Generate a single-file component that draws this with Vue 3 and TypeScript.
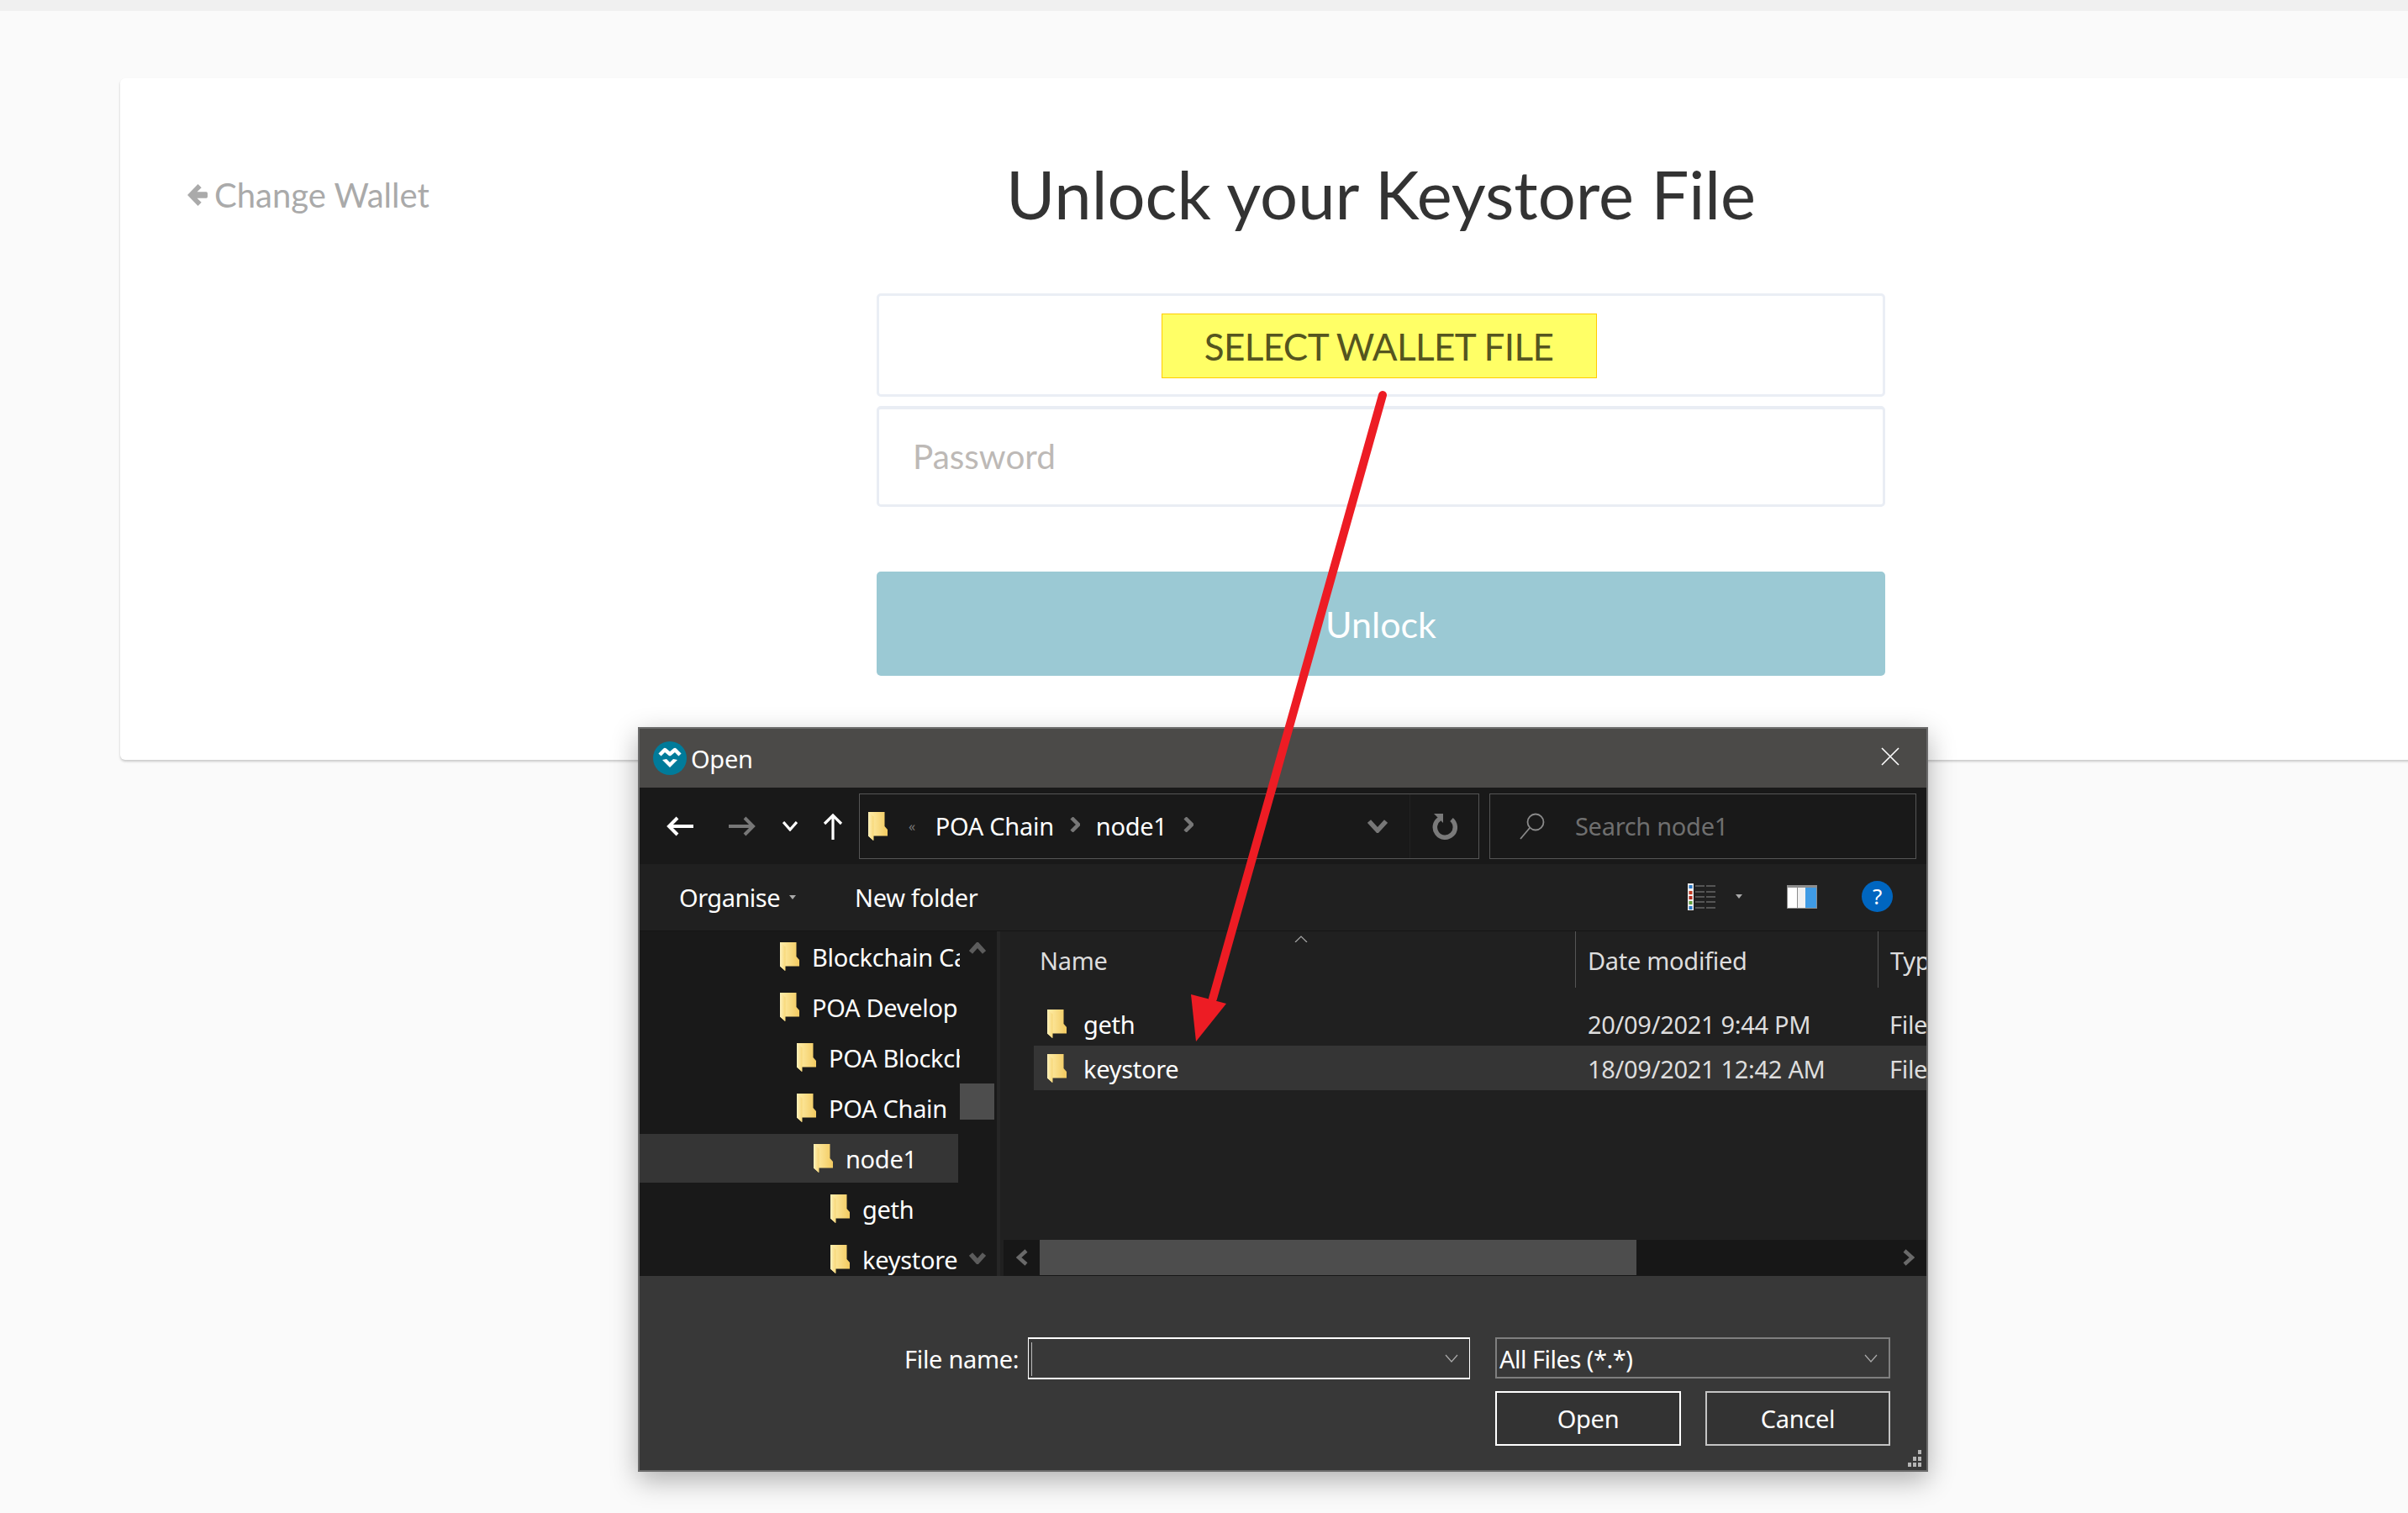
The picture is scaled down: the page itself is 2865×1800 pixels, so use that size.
<template>
  <div class="page">
    <svg class="defs" width="0" height="0">
      <defs>
        <linearGradient id="folderBody" x1="0" y1="0" x2="1" y2="0">
          <stop offset="0" stop-color="#ffeeaa" />
          <stop offset="1" stop-color="#f2ca60" />
        </linearGradient>
        <linearGradient id="folderFlap" x1="0" y1="0" x2="1" y2="0">
          <stop offset="0" stop-color="#fef2bd" />
          <stop offset="1" stop-color="#f7d777" />
        </linearGradient>
        <symbol id="folder" viewBox="0 0 23 34">
          <path d="M1 0H19.500V17L23 21V28.500H6V34L0 28.500V0Z" fill="url(#folderBody)" />
          <path d="M0 0L6.500 5.500V34L0 28.500Z" fill="url(#folderFlap)" />
        </symbol>
      </defs>
    </svg>

    <div class="topbar"></div>

    <section class="card">
      <a class="back">
        <svg class="back-icon" viewBox="0 0 23 25">
          <path d="M12 0L0 12.500L12 25L16 21L11 16H21.500Q23 16 23 14.500V10.500Q23 9 21.500 9H11L16 4Z" />
        </svg>
        <span>Change Wallet</span>
      </a>
      <div class="form">
        <h1>Unlock your Keystore File</h1>
        <div class="file-box">
          <button class="select-file">SELECT WALLET FILE</button>
        </div>
        <div class="password">Password</div>
        <button class="unlock">Unlock</button>
      </div>
    </section>

    <div class="dialog">
      <header class="titlebar">
        <svg class="logo" viewBox="0 0 40 40">
          <ellipse cx="20" cy="20" rx="20" ry="20" fill="#007b9a" />
          <path d="M8 16L14 10L20 15L26 10L32 16" fill="none" stroke="#fff" stroke-width="4.500" stroke-linejoin="round" />
          <path d="M11 22L20 31L29 22L24 21L20 25L16 21Z" fill="#fff" />
        </svg>
        <span class="title-text">Open</span>
        <svg class="close" viewBox="0 0 22 22">
          <path d="M1 1L21 21M21 1L1 21" stroke="#fff" stroke-width="1.600" />
        </svg>
      </header>

      <div class="toolbar">
        <svg class="nav-icon back-nav" viewBox="0 0 32 24">
          <path d="M32 12H3M13 2L3 12L13 22" fill="none" stroke="#fff" stroke-width="4" />
        </svg>
        <svg class="nav-icon forward-nav" viewBox="0 0 32 24">
          <path d="M0 12H29M19 2L29 12L19 22" fill="none" stroke="#777" stroke-width="4" />
        </svg>
        <svg class="nav-icon down-nav" viewBox="0 0 18 12">
          <path d="M1 1L9 10L17 1" fill="none" stroke="#fff" stroke-width="3.200" />
        </svg>
        <svg class="nav-icon up-nav" viewBox="0 0 24 32">
          <path d="M12 32V3M2 13L12 3L22 13" fill="none" stroke="#fff" stroke-width="3.200" />
        </svg>
        <div class="address">
          <svg class="folder-icon"><use href="#folder" /></svg>
          <span class="crumb-more">«</span>
          <span class="crumb">POA Chain</span>
          <svg class="crumb-sep" viewBox="0 0 12 18"><path d="M2 1L10 9L2 17" fill="none" stroke="#777" stroke-width="4.500" /></svg>
          <span class="crumb">node1</span>
          <svg class="crumb-sep" viewBox="0 0 12 18"><path d="M2 1L10 9L2 17" fill="none" stroke="#777" stroke-width="4.500" /></svg>
          <svg class="address-drop" viewBox="0 0 24 16"><path d="M2 2L12 13L22 2" fill="none" stroke="#777" stroke-width="5.500" /></svg>
          <div class="refresh">
            <svg viewBox="0 0 30 32">
              <path d="M9 7A12 12 0 1 0 23 8" fill="none" stroke="#7a7a7a" stroke-width="5.500" />
              <path d="M2 1H13V12Z" fill="#7a7a7a" />
            </svg>
          </div>
        </div>
        <div class="search">
          <svg class="search-icon" viewBox="0 0 30 32">
            <circle cx="19" cy="11" r="9.500" fill="none" stroke="#8a8a8a" stroke-width="1.800" />
            <path d="M12 18L1 31" stroke="#8a8a8a" stroke-width="1.800" />
          </svg>
          <span>Search node1</span>
        </div>
      </div>

      <div class="commands">
        <span class="cmd organise">Organise</span>
        <i class="mini-caret organise-caret"></i>
        <span class="cmd">New folder</span>
        <div class="cmd-right">
          <svg class="view-icon" viewBox="0 0 35 32">
            <rect x="0" y="0" width="7" height="32" fill="#eee" />
            <rect x="1.500" y="2" width="4" height="4" fill="#2b78c5" />
            <rect x="1.500" y="9" width="4" height="4" fill="#c23b22" />
            <rect x="1.500" y="15" width="4" height="4" fill="#b22a1c" />
            <rect x="1.500" y="21" width="4" height="4" fill="#5f9e3c" />
            <rect x="1.500" y="27" width="4" height="4" fill="#2b78c5" />
            <path d="M9 3H34M9 10H34M9 16H34M9 22H34M9 29H34" stroke="#8a8a8a" stroke-width="1.200" stroke-dasharray="11 2" />
          </svg>
          <i class="mini-caret view-caret"></i>
          <svg class="pane-icon" viewBox="0 0 36 28">
            <rect width="36" height="28" fill="#8d8d8d" />
            <rect x="1" y="3" width="11" height="24" fill="#fff" />
            <rect x="13" y="3" width="9" height="24" fill="#f1f1f1" />
            <rect x="22" y="3" width="13" height="24" fill="#3f9be5" />
          </svg>
          <span class="help">?</span>
        </div>
      </div>

      <div class="main">
        <aside class="tree">
          <div class="tree-list">
            <div
              v-for="row in treeRows"
              :key="row.name"
              :class="['tree-row', { selected: row.selected }]"
              :style="{ paddingLeft: 167 + row.level * 20 + 'px' }"
            >
              <svg class="folder-icon"><use href="#folder" /></svg>
              <span>{{ row.name }}</span>
            </div>
          </div>
          <div class="vscroll">
            <svg class="scroll-arrow" viewBox="0 0 20 14"><path d="M2 12L10 3L18 12" fill="none" stroke="#5c5c5c" stroke-width="5.500" /></svg>
            <div class="vthumb"></div>
            <svg class="scroll-arrow" viewBox="0 0 20 14"><path d="M2 2L10 11L18 2" fill="none" stroke="#5c5c5c" stroke-width="5.500" /></svg>
          </div>
        </aside>

        <div class="files">
          <div class="file-list">
            <div class="file-head">
              <div class="head-cell name-cell">
                Name
                <svg class="sort-caret" viewBox="0 0 16 8"><path d="M1 8L8 1L15 8" fill="none" stroke="#aaa" stroke-width="1.200" /></svg>
              </div>
              <div class="head-cell">Date modified</div>
              <div class="head-cell">Type</div>
            </div>
            <div
              v-for="file in files"
              :key="file.name"
              :class="['file-row', { selected: file.selected }]"
            >
              <div class="file-name">
                <svg class="folder-icon"><use href="#folder" /></svg>
                <span>{{ file.name }}</span>
              </div>
              <div class="file-date">{{ file.date }}</div>
              <div class="file-type">File folder</div>
            </div>
          </div>
          <div class="hscroll">
            <div class="hbtn">
              <svg viewBox="0 0 14 20"><path d="M12 2L3 10L12 18" fill="none" stroke="#6a6a6a" stroke-width="4.500" /></svg>
            </div>
            <div class="hthumb"></div>
            <div class="htrack"></div>
            <div class="hbtn">
              <svg viewBox="0 0 14 20"><path d="M2 2L11 10L2 18" fill="none" stroke="#6a6a6a" stroke-width="4.500" /></svg>
            </div>
          </div>
        </div>
      </div>

      <footer class="bottom">
        <div class="name-row">
          <label>File name:</label>
          <div class="name-input">
            <i class="caret"></i>
            <svg class="combo-arrow" viewBox="0 0 16 10"><path d="M1 1L8 9L15 1" fill="none" stroke="#aaa" stroke-width="1.200" /></svg>
          </div>
          <div class="type-select">
            <span>All Files (*.*)</span>
            <svg class="combo-arrow" viewBox="0 0 16 10"><path d="M1 1L8 9L15 1" fill="none" stroke="#aaa" stroke-width="1.200" /></svg>
          </div>
        </div>
        <div class="button-row">
          <button class="dlg-btn primary">Open</button>
          <button class="dlg-btn">Cancel</button>
        </div>
        <svg class="grip" viewBox="0 0 21 20">
          <path d="M17 0h4v5h-4zM11 8h4v5h-4zM17 8h4v5h-4zM5 15h4v5H5zM11 15h4v5h-4zM17 15h4v5h-4z" fill="#b5b5b5" />
        </svg>
      </footer>
    </div>

    <svg class="red-arrow" viewBox="0 0 2865 1800">
      <path d="M1645 470L1443 1188" fill="none" stroke="#ed1c24" stroke-width="10" stroke-linecap="round" />
      <path d="M1423 1239L1417 1183L1444 1190L1459 1194Z" fill="#ed1c24" />
    </svg>
  </div>
</template>

<script setup lang="ts">
interface TreeRow {
  name: string;
  level: number;
  selected?: boolean;
}

interface FileRow {
  name: string;
  date: string;
  selected?: boolean;
}

// the tree column is narrow in the reference, names stay as far as they show
const treeRows: TreeRow[] = [
  { name: 'Blockchain Ca', level: 0 },
  { name: 'POA Develop', level: 0 },
  { name: 'POA Blockch', level: 1 },
  { name: 'POA Chain', level: 1 },
  { name: 'node1', level: 2, selected: true },
  { name: 'geth', level: 3 },
  { name: 'keystore', level: 3 },
];

const files: FileRow[] = [
  { name: 'geth', date: '20/09/2021 9:44 PM' },
  { name: 'keystore', date: '18/09/2021 12:42 AM', selected: true },
];
</script>

<style>
html,
body {
  margin: 0;
  overflow: hidden;
}
</style>

<style scoped>
.page {
  position: relative;
  width: 2865px;
  height: 1800px;
  overflow: hidden;
  background: #fafafa;
  font-family: Lato, "Open Sans", sans-serif;
}
.defs {
  position: absolute;
}
.topbar {
  height: 13px;
  background: #f0f0f0;
}
.card {
  display: grid;
  grid-template-columns: 900px 1200px;
  box-sizing: border-box;
  width: 2999px;
  height: 811px;
  margin: 80px 0 0 143px;
  background: #fff;
  border-radius: 6px;
  box-shadow: 0 2px 3px rgba(0, 0, 0, 0.2);
}
.back {
  display: flex;
  align-items: center;
  align-self: start;
  gap: 8px;
  margin: 115px 0 0 80px;
  font-size: 40px;
  line-height: 48px;
  color: #aaa;
}
.back-icon {
  width: 24px;
  height: 26px;
  fill: #aaa;
}
.form {
  display: flex;
  flex-direction: column;
}
h1 {
  margin: 92px 0 0;
  height: 164px;
  font-size: 79.500px;
  font-weight: 400;
  line-height: 92px;
  text-align: center;
  color: #333;
}
.file-box {
  display: flex;
  justify-content: center;
  box-sizing: border-box;
  height: 123px;
  padding-top: 21px;
  border: 3px solid #eaeef5;
  border-radius: 5px;
  background: #fff;
}
.select-file {
  box-sizing: border-box;
  width: 518px;
  height: 77px;
  margin-left: -5px;
  border: 1px solid #ffcc00;
  background: #ffff66;
  color: #55551f;
  font: 400 44px/1 Lato, sans-serif;
  letter-spacing: -0.6px;
  padding: 0;
}
.password {
  box-sizing: border-box;
  height: 120px;
  margin-top: 11px;
  padding: 0 0 0 40px;
  border: 3px solid #e9edf4;
  border-top-width: 4px;
  border-radius: 5px;
  color: #bdb9b6;
  font-size: 40.500px;
  line-height: 112px;
}
.unlock {
  height: 124px;
  margin-top: 77px;
  border: 0;
  border-radius: 5px;
  background: #9bc9d4;
  color: #fff;
  font: 400 43px/1 Lato, sans-serif;
  padding: 0;
}
.red-arrow {
  position: absolute;
  top: 0;
  left: 0;
  width: 2865px;
  height: 1800px;
  pointer-events: none;
}

.dialog {
  position: absolute;
  top: 865px;
  left: 759px;
  display: flex;
  flex-direction: column;
  box-sizing: border-box;
  width: 1535px;
  height: 886px;
  overflow: hidden;
  border: 2px solid #6b6b6b;
  background: #383838;
  box-shadow: 0 10px 30px rgba(0, 0, 0, 0.3);
  color: #fff;
  font-family: "Noto Sans", "Open Sans", sans-serif;
  font-size: 29px;
  letter-spacing: -0.3px;
}
.titlebar {
  display: flex;
  align-items: center;
  flex: none;
  height: 70px;
  padding: 0 32px 0 16px;
  background: #4b4a48;
}
.logo {
  width: 40px;
  height: 40px;
}
.title-text {
  margin-left: 5px;
  font-size: 29px;
}
.close {
  width: 22px;
  height: 22px;
  margin-left: auto;
  margin-top: -4px;
}
.toolbar {
  display: flex;
  align-items: center;
  flex: none;
  height: 91px;
  background: #191919;
}
.nav-icon {
  flex: none;
}
.back-nav {
  width: 32px;
  height: 24px;
  margin-left: 32px;
}
.forward-nav {
  width: 32px;
  height: 24px;
  margin-left: 42px;
}
.down-nav {
  width: 18px;
  height: 12px;
  margin-left: 32px;
}
.up-nav {
  width: 24px;
  height: 32px;
  margin-left: 30px;
}
.address {
  display: flex;
  align-items: center;
  box-sizing: border-box;
  width: 738px;
  height: 78px;
  margin-left: 19px;
  padding-left: 10px;
  border: 1px solid #555;
}
.folder-icon {
  flex: none;
  width: 23px;
  height: 34px;
}
.crumb-more {
  margin: 0 24px 0 25px;
  color: #777;
  font-size: 16px;
}
.crumb {
  color: #fff;
}
.crumb-sep {
  flex: none;
  width: 12px;
  height: 18px;
  margin: -4px 19px 0;
}
.address-drop {
  width: 24px;
  height: 16px;
  margin-left: auto;
}
.refresh {
  display: flex;
  align-items: center;
  justify-content: center;
  align-self: stretch;
  width: 81px;
  margin-left: 26px;
  border-left: 1px solid #222;
}
.refresh svg {
  width: 30px;
  height: 32px;
}
.search {
  display: flex;
  align-items: center;
  box-sizing: border-box;
  width: 508px;
  height: 78px;
  margin-left: 12px;
  padding-left: 35px;
  border: 1px solid #555;
  color: #6f6f6f;
}
.search-icon {
  width: 30px;
  height: 32px;
  margin-right: 36px;
}
.commands {
  display: flex;
  align-items: center;
  flex: none;
  height: 79px;
  background: #202020;
}
.cmd {
  color: #fff;
}
.organise {
  margin-left: 47px;
  letter-spacing: -0.5px;
}
.mini-caret {
  display: block;
  width: 0;
  height: 0;
  border-left: 4px solid transparent;
  border-right: 4px solid transparent;
  border-top: 5px solid #aaa;
}
.organise-caret {
  margin: 0 70px 0 11px;
}
.cmd-right {
  display: flex;
  align-items: center;
  margin: -2px 0 0 auto;
  padding-right: 40px;
}
.view-icon {
  width: 35px;
  height: 32px;
}
.view-caret {
  margin: 0 53px 0 22px;
}
.pane-icon {
  width: 36px;
  height: 28px;
}
.help {
  width: 37px;
  height: 37px;
  margin-left: 53px;
  border-radius: 50%;
  background: #0066c0;
  font-size: 26px;
  line-height: 36px;
  text-align: center;
}
.main {
  display: flex;
  flex: none;
  height: 411px;
  overflow: hidden;
  border-top: 1px solid #151515;
  box-sizing: border-box;
}
.tree {
  display: flex;
  flex: none;
  width: 425px;
  margin-right: 4px;
  background: #191919;
}
.tree-list {
  width: 381px;
  padding-top: 1px;
  overflow: hidden;
}
.tree-row {
  display: flex;
  align-items: center;
  gap: 15px;
  box-sizing: border-box;
  height: 58px;
  margin-bottom: 2px;
  white-space: nowrap;
}
.tree-row.selected {
  width: 379px;
  background: #353535;
}
.vscroll {
  position: relative;
  width: 41px;
  flex: none;
}
.vthumb {
  position: absolute;
  top: 181px;
  left: 0;
  width: 41px;
  height: 43px;
  background: #4d4d4d;
}
.scroll-arrow {
  position: absolute;
  left: 11px;
  width: 20px;
  height: 14px;
}
.scroll-arrow:first-child {
  top: 13px;
}
.scroll-arrow:last-child {
  top: 382px;
}
.files {
  display: flex;
  flex: 1;
  flex-direction: column;
  min-width: 0;
  background: #202020;
  border-left: 4px solid #262626;
  margin-left: -4px;
}
.file-list {
  flex: 1;
  padding-left: 40px;
  overflow: hidden;
}
.file-head {
  display: grid;
  grid-template-columns: 644px 360px 1fr;
  height: 83px;
  color: #ddd;
}
.head-cell {
  height: 67px;
  box-sizing: border-box;
  padding-left: 14px;
  border-left: 1px solid #555;
  line-height: 70px;
  white-space: nowrap;
}
.name-cell {
  position: relative;
  padding-left: 7px;
  border-left: 0;
}
.sort-caret {
  position: absolute;
  top: 5px;
  left: 310px;
  width: 16px;
  height: 8px;
}
.file-row {
  display: grid;
  grid-template-columns: 659px 359px 1fr;
  align-items: center;
  height: 53px;
  white-space: nowrap;
}
.file-row.selected {
  background: #353535;
}
.file-name {
  display: flex;
  align-items: center;
  gap: 20px;
  padding-left: 16px;
}
.file-name span,
.file-date,
.file-type {
  padding-top: 2px;
}
.file-date,
.file-type {
  color: #ddd;
}
.hscroll {
  display: flex;
  flex: none;
  height: 43px;
  box-sizing: border-box;
  margin-left: 4px;
  padding-bottom: 1px;
  background: #171717;
}
.hbtn {
  display: flex;
  align-items: center;
  justify-content: center;
  flex: none;
  width: 43px;
}
.hbtn svg {
  width: 14px;
  height: 20px;
}
.hthumb {
  width: 710px;
  flex: none;
  background: #4d4d4d;
}
.htrack {
  flex: 1;
}
.bottom {
  position: relative;
  flex: 1;
  background: #383838;
  padding-top: 73px;
}
.name-row {
  display: flex;
  align-items: flex-start;
  padding-left: 315px;
}
.name-row label {
  width: 133px;
  margin-right: 14px;
  line-height: 52px;
  white-space: nowrap;
}
.name-input {
  position: relative;
  box-sizing: border-box;
  width: 526px;
  height: 50px;
  border: 1px solid #fff;
  border-width: 2px 1px;
}
.caret {
  position: absolute;
  top: 4px;
  left: 3px;
  width: 1px;
  height: 40px;
  background: #bbb;
}
.type-select {
  position: relative;
  box-sizing: border-box;
  width: 470px;
  height: 49px;
  margin-left: 30px;
  padding-left: 3px;
  border: 2px solid #7f7f7f;
  letter-spacing: -0.5px;
  line-height: 48px;
}
.combo-arrow {
  position: absolute;
  top: 18px;
  right: 13px;
  width: 16px;
  height: 10px;
}
.button-row {
  display: flex;
  justify-content: flex-end;
  gap: 29px;
  margin-top: 12px;
  padding-right: 43px;
}
.dlg-btn {
  box-sizing: border-box;
  width: 220px;
  height: 65px;
  padding: 0;
  border: 2px solid #c4c4c4;
  background: #333;
  color: #fff;
  font: inherit;
  letter-spacing: inherit;
}
.dlg-btn.primary {
  width: 221px;
  border-color: #fff;
}
.grip {
  position: absolute;
  right: 6px;
  bottom: 4px;
  width: 21px;
  height: 20px;
}
</style>
